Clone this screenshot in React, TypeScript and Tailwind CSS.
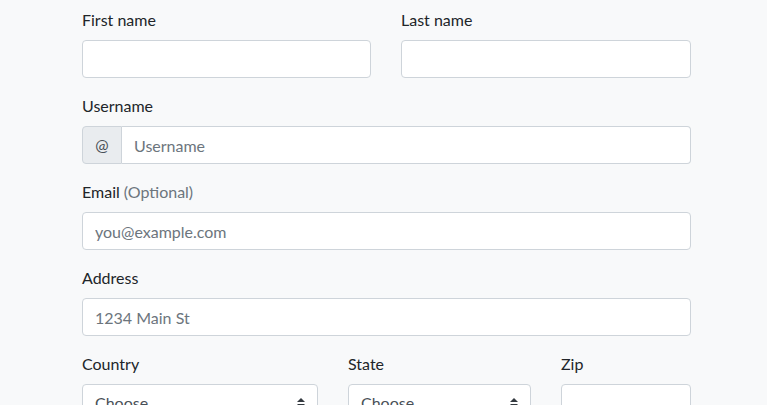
import React, { FC } from "react";

const font = { fontFamily: "Lato, 'Liberation Sans', sans-serif" };

const inputCls =
  "block w-full h-[38px] px-3 bg-white border border-[#ced4da] rounded-[4px] text-[16px] text-[#495057] placeholder:text-[#6c757d] outline-none";

const Label: FC<{ children: React.ReactNode }> = ({ children }) => (
  <label className="block mb-2 h-6 leading-6 text-[16px] text-[#212529]">{children}</label>
);

const SelectBox: FC = () => (
  <div className="relative h-[38px] bg-white border border-[#ced4da] rounded-[4px] flex items-center px-3 text-[16px] text-[#495057]">
    <span>Choose...</span>
    {/* double caret */}
    <svg className="absolute right-3 top-1/2 -translate-y-1/2" width="8" height="10" viewBox="0 0 4 5">
      <path d="M2 0L0 2h4zm0 5L0 3h4z" fill="#343a40" />
    </svg>
  </div>
);

const App: FC = () => {
  return (
    <div className="min-h-[405px] w-full bg-[#f8f9fa] overflow-hidden" style={font}>
      <div className="pl-[82px] pt-2 w-[691px]">
        {/* name row */}
        <div className="flex gap-[30px] mb-4">
          <div className="w-[289px]">
            <Label>First name</Label>
            <input className={inputCls} />
          </div>
          <div className="flex-1">
            <Label>Last name</Label>
            <input className={inputCls} />
          </div>
        </div>

        <div className="mb-4">
          <Label>Username</Label>
          <div className="flex h-[38px]">
            <span className="w-10 flex items-center justify-center bg-[#e9ecef] border border-[#ced4da] rounded-l-[4px] text-[16px] text-[#495057]">
              @
            </span>
            <input
              placeholder="Username"
              className="flex-1 h-[38px] px-3 bg-white border border-l-0 border-[#ced4da] rounded-r-[4px] text-[16px] text-[#495057] placeholder:text-[#6c757d] outline-none"
            />
          </div>
        </div>

        <div className="mb-4">
          <Label>
            Email <span className="text-[#6c757d]">(Optional)</span>
          </Label>
          <input placeholder="you@example.com" className={inputCls} />
        </div>

        <div className="mb-4">
          <Label>Address</Label>
          <input placeholder="1234 Main St" className={inputCls} />
        </div>

        <div className="flex gap-[30px]">
          <div className="w-[236px]">
            <Label>Country</Label>
            <SelectBox />
          </div>
          <div className="w-[183px]">
            <Label>State</Label>
            <SelectBox />
          </div>
          <div className="w-[130px]">
            <Label>Zip</Label>
            <input className={inputCls} />
          </div>
        </div>
      </div>
    </div>
  );
};

export default App;
